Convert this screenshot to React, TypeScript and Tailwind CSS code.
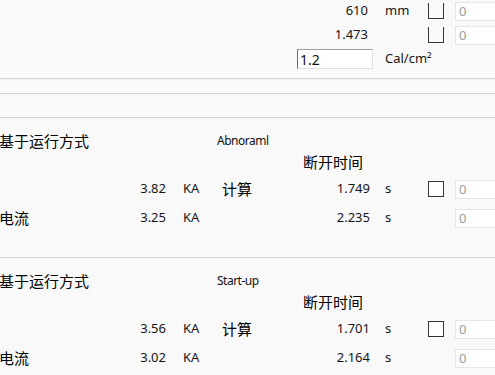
const zh = { fontFamily: '"Noto Sans CJK SC", "Noto Sans", sans-serif' };
const ui = { fontFamily: '"Noto Sans", "Liberation Sans", sans-serif' };

function Sep() {
    return <div className="h-[2px] border-t border-t-[#d6d6d6] border-b border-b-[#f2f2f2]" />;
}

function ValueBox() {
    return (
        <div className="ml-[11px] h-[19px] w-[60px] shrink-0 border border-[#e6e6e6] bg-white pl-[3px] text-[13px] leading-[17px] text-[#9c9c9c]">
            0
        </div>
    );
}

function TopRow({ value, unit }: { value: string; unit: string }) {
    return (
        <div className="flex h-[24px] items-center text-[13px] text-[#161616]">
            <span className="w-[368px] shrink-0 text-right">{value}</span>
            <span className="ml-[17px] w-[43px] shrink-0">{unit}</span>
            <div className="h-[16px] w-[16px] shrink-0 border-x border-b border-[#333]" />
            <ValueBox />
        </div>
    );
}

type Group = {
    mode: string;
    a1: string;
    a2: string;
    t1: string;
    t2: string;
};

function GroupBlock({ g }: { g: Group }) {
    return (
        <div className="h-[140px]">
            <Sep />
            <div className="mt-[10px] flex h-[24px] items-center">
                <span className="-ml-[1px] w-[218px] shrink-0 text-[15px] text-black" style={zh}>基于运行方式</span>
                <span className="text-[12px] tracking-[-0.5px] text-[#111]">{g.mode}</span>
            </div>
            <div className="flex h-[18px] items-center">
                <span className="ml-[303px] text-[15px] text-black" style={zh}>断开时间</span>
            </div>
            <div className="mt-[3px] flex h-[30px] items-center text-[13px] text-[#161616]">
                <span className="w-[120px] shrink-0" />
                <span className="w-[46px] shrink-0 text-right">{g.a1}</span>
                <span className="ml-[17px] w-[39px] shrink-0">KA</span>
                <span className="w-[50px] shrink-0 text-[15px] text-black" style={zh}>计算</span>
                <span className="w-[98px] shrink-0 text-right">{g.t1}</span>
                <span className="ml-[15px] w-[43px] shrink-0">s</span>
                <div className="h-[16px] w-[16px] shrink-0 border border-[#333] bg-white" />
                <ValueBox />
            </div>
            <div className="flex h-[28px] items-center text-[13px] text-[#161616]">
                <span className="-ml-[1px] w-[121px] shrink-0 text-[15px] text-black" style={zh}>电流</span>
                <span className="w-[46px] shrink-0 text-right">{g.a2}</span>
                <span className="ml-[17px] w-[39px] shrink-0">KA</span>
                <span className="w-[50px] shrink-0" />
                <span className="w-[98px] shrink-0 text-right">{g.t2}</span>
                <span className="ml-[15px] w-[43px] shrink-0">s</span>
                <div className="h-[16px] w-[16px] shrink-0" />
                <ValueBox />
            </div>
        </div>
    );
}

const groups: Group[] = [
    { mode: 'Abnoraml', a1: '3.82', a2: '3.25', t1: '1.749', t2: '2.235' },
    { mode: 'Start-up', a1: '3.56', a2: '3.02', t1: '1.701', t2: '2.164' },
];

export default function App() {
    return (
        <div className="h-[375px] w-[495px] overflow-hidden bg-[#f9f9f9]" style={ui}>
            <div className="-mt-[1px]">
                <TopRow value="610" unit="mm" />
                <TopRow value="1.473" unit="" />
                <div className="flex h-[24px] items-center">
                    <div className="ml-[297px] h-[20px] w-[76px] shrink-0 border-t border-l border-t-[#a0a0a0] border-l-[#6e6e6e] border-r border-b border-r-[#e2e2e2] border-b-[#e2e2e2] bg-white pl-[2px] text-[14px] leading-[19px] text-[#111]">
                        1.2
                    </div>
                    <span className="ml-[12px] text-[13px] text-[#161616]">Cal/cm²</span>
                </div>
            </div>
            <div className="mt-[7px]">
                <Sep />
            </div>
            <div className="mt-[13px]">
                <Sep />
            </div>
            <div className="mt-[22px]">
                {groups.map((g) => (
                    <GroupBlock key={g.mode} g={g} />
                ))}
            </div>
        </div>
    );
}
